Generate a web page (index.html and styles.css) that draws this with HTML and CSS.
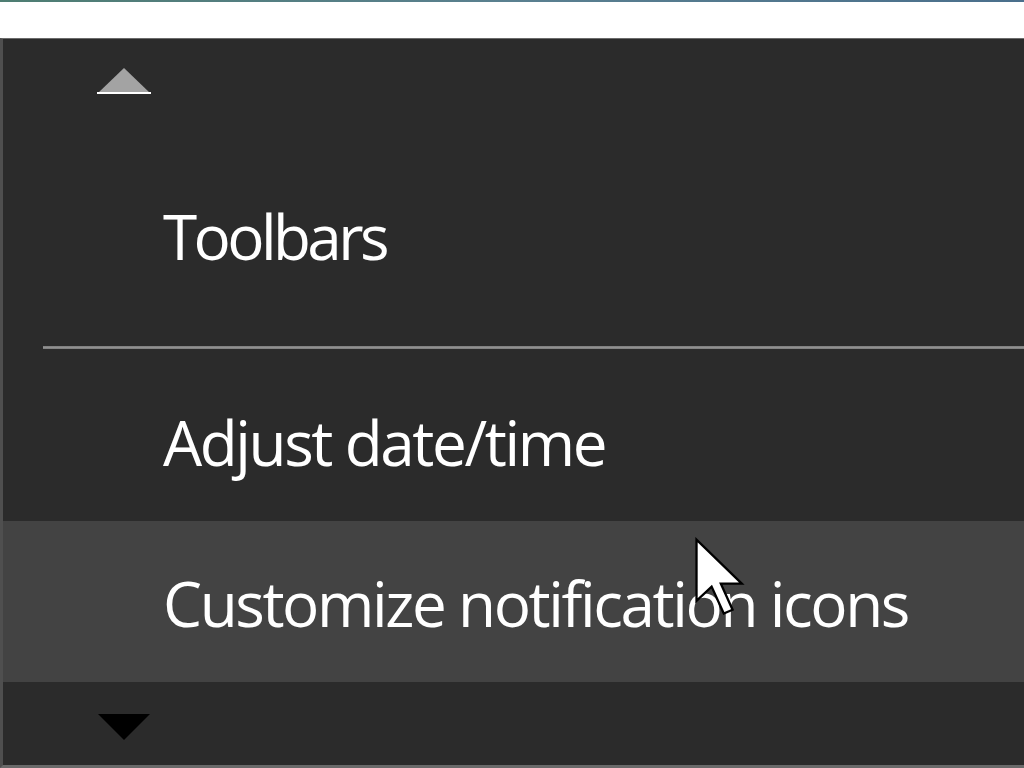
FILE: index.html
```html
<!DOCTYPE html>
<html lang="en">
<head>
<meta charset="utf-8">
<title>Context menu</title>
<link rel="stylesheet" href="styles.css">
</head>
<body>
<div class="topline"></div>
<div class="topbar"></div>
<div class="menu">
  <div class="scroll scroll-up">
    <svg class="arrow" width="54" height="28" viewBox="0 0 54 28">
      <polygon points="27,1 53,26 1,26" fill="#a3a3a3"/>
      <rect x="0" y="25" width="54" height="2" fill="#ffffff"/>
    </svg>
  </div>
  <div class="item item-first"><span class="label">Toolbars</span></div>
  <div class="separator"><div class="rule"></div></div>
  <div class="item"><span class="label">Adjust date/time</span></div>
  <div class="item item-hover"><span class="label">Customize notification icons</span></div>
  <div class="scroll scroll-down">
    <svg class="arrow" width="54" height="28" viewBox="0 0 54 28">
      <polygon points="1,1 53,1 27,27" fill="#000000"/>
    </svg>
  </div>
  <svg class="cursor" width="52" height="80" viewBox="-0.6 -0.6 12.4 19">
    <path d="M0 0 V14.6 L3.6 11.2 L6.5 17.6 L8.6 16.7 L5.8 10.5 H10.8 Z" fill="#ffffff" stroke="#000000" stroke-width="0.55" stroke-linejoin="miter"/>
  </svg>
</div>
</body>
</html>
```
FILE: styles.css
```css
html, body {
  margin: 0;
  padding: 0;
  background: #ffffff;
  width: 1024px;
  height: 768px;
  overflow: hidden;
}

.topline {
  height: 2px;
  background: linear-gradient(to right, #4e7d72, #5a8090 50%, #4a6f8c);
}

.topbar {
  height: 36px;
  background: #ffffff;
}

.menu {
  position: relative;
  height: 726px;
  background: #2b2b2b;
  border-top: 1px solid #6b6b6b;
  border-left: 3px solid #4f4f4f;
  border-bottom: 3px solid #6a6a6a;
  box-sizing: content-box;
  display: flex;
  flex-direction: column;
  font-family: "Open Sans", "Noto Sans", sans-serif;
  color: #ffffff;
}

.scroll {
  display: flex;
  padding-left: 94px;
}

.scroll-up {
  height: 115px;
  padding-top: 28px;
  box-sizing: border-box;
}

.scroll-down {
  height: 83px;
  padding-top: 31px;
  box-sizing: border-box;
}

.arrow {
  display: block;
}

.item {
  height: 160px;
  display: flex;
  align-items: center;
  padding-left: 160px;
  font-size: 62px;
  letter-spacing: -2.4px;
  line-height: 1;
}

.item-first {
  height: 161px;
  letter-spacing: -3.6px;
}

.item-hover {
  height: 161px;
  background: #434343;
}

.label {
  display: block;
  margin-top: 2px;
}

.separator {
  height: 46px;
  padding-top: 31px;
  padding-left: 40px;
  box-sizing: border-box;
}

.rule {
  height: 3px;
  background: linear-gradient(#7a7a7a, #909090 50%, #7a7a7a);
}

.cursor {
  position: absolute;
  left: 691px;
  top: 498px;
}
```
